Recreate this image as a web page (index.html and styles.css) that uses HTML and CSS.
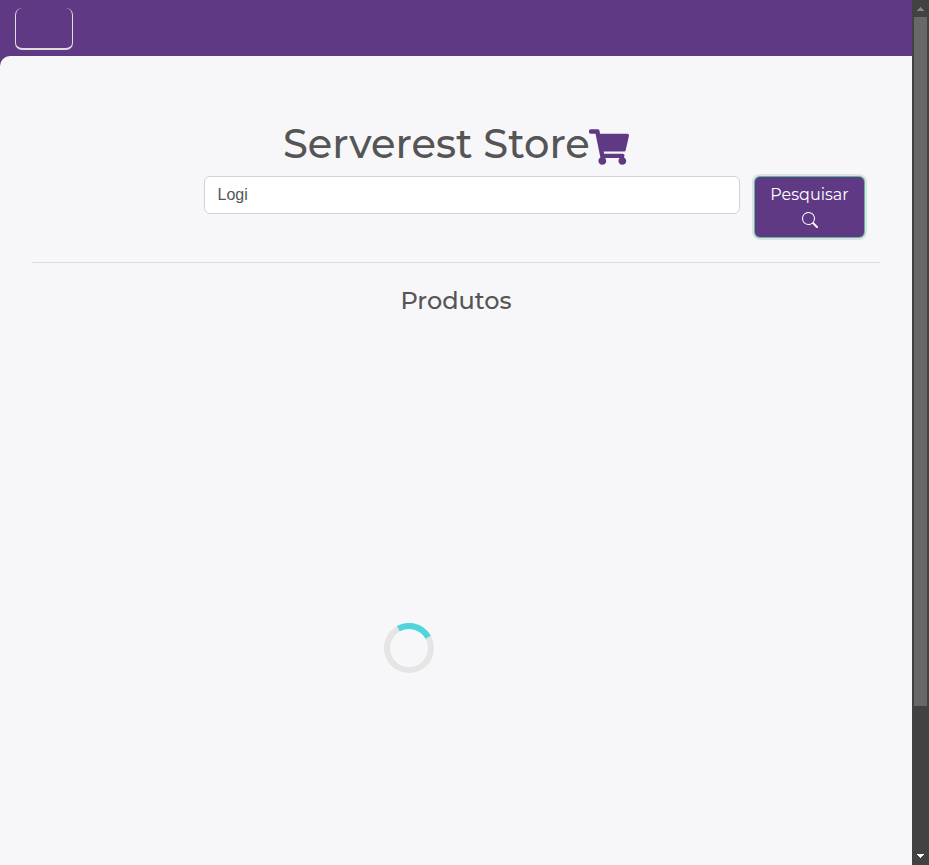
FILE: index.html
```
<!DOCTYPE html>
<html lang="pt-BR">
<head>
<meta charset="utf-8">
<title>Serverest Store</title>
<link rel="stylesheet" href="styles.css">
</head>
<body>
<div class="page">
  <nav class="navbar"><button class="toggler" aria-label="Menu"></button></nav>
  <main class="content">
    <h1 class="title"><span class="title-text">Serverest Store</span><svg class="cart" viewBox="0 0 576 512"><path d="M528.12 301.319l47.273-208C578.806 78.301 567.391 64 551.99 64H159.208l-9.166-44.81C147.758 8.021 137.93 0 126.529 0H24C10.745 0 0 10.745 0 24v16c0 13.255 10.745 24 24 24h69.883l70.248 343.435C147.325 417.1 136 435.222 136 456c0 30.928 25.072 56 56 56s56-25.072 56-56c0-15.674-6.447-29.835-16.824-40h209.647C430.447 426.165 424 440.326 424 456c0 30.928 25.072 56 56 56s56-25.072 56-56c0-22.172-12.888-41.332-31.579-50.405l5.517-24.276c3.413-15.018-8.002-29.319-23.403-29.319H218.117l-6.545-32h293.145c11.206 0 20.92-7.754 23.403-18.681z"/></svg></h1>
    <form class="search">
      <input class="field" type="text" value="Logi">
      <button class="submit" type="button"><span class="submit-text">Pesquisar</span>
        <svg class="lens" viewBox="0 0 16 16"><path d="M11.742 10.344a6.5 6.5 0 1 0-1.397 1.398h-.001c.03.04.062.078.098.115l3.85 3.85a1 1 0 0 0 1.415-1.414l-3.85-3.85a1.007 1.007 0 0 0-.115-.1zM12 6.5a5.5 5.5 0 1 1-11 0 5.5 5.5 0 0 1 11 0z"/></svg>
      </button>
    </form>
    <hr class="rule">
    <h4 class="subtitle"><span class="subtitle-text">Produtos</span></h4>
    <svg class="spinner" viewBox="0 0 50 50"><circle class="track" cx="25" cy="25" r="22"/><path class="arc" d="M14.4 5.7A22 22 0 0 1 44.2 14.3"/></svg>
  </main>
</div>
<div class="scrollbar">
  <svg class="arrow up" viewBox="0 0 17 17"><path d="M5 11h7L8.5 7z"/></svg>
  <div class="thumb"></div>
  <svg class="arrow down" viewBox="0 0 17 17"><path d="M5 6h7L8.5 10z"/></svg>
</div>
</body>
</html>
```
FILE: styles.css
```
* { box-sizing: border-box; }
body {
  margin: 0;
  height: 865px;
  display: flex;
  overflow: hidden;
  background: #603985;
  color: #555;
  font-family: Montserrat, Inter, sans-serif;
}
.page { width: 912px; }
.navbar { height: 56px; padding: 8px 15px; }
.toggler {
  display: block;
  width: 58px;
  height: 42px;
  padding: 0;
  background: transparent;
  border: 1px solid #dedede;
  border-width: 0 1px 2px;
  border-radius: 7px;
}
.content {
  height: 809px;
  padding: 64px 32px 0;
  background: #f7f7fa;
  border-top-left-radius: 10px;
}
.title {
  display: flex;
  justify-content: center;
  height: 48px;
  margin: 0 0 8px;
  font-size: 40px;
  line-height: 48px;
  font-weight: 500;
}
.title-text { width: 306px; white-space: nowrap; }
.cart { width: 40px; height: 36px; margin-top: 9px; fill: #603985; }
.search { display: flex; align-items: flex-start; padding-left: 172px; }
.field {
  width: 536px;
  height: 38px;
  padding: 0 12.5px;
  border: 1px solid #ced4da;
  border-radius: 6px;
  background: #fff;
  color: #555;
  font: 16px "Liberation Sans", Arial, sans-serif;
}
.submit {
  display: flex;
  flex-direction: column;
  align-items: center;
  width: 109px;
  height: 60px;
  margin: 1px 0 0 15px;
  padding: 6px 0 0;
  border: 0;
  border-radius: 5px;
  background: #603985;
  box-shadow: 0 0 0 1px #60b898, 0 0 0 3px #dce3e4;
  color: #fff;
  font: 400 16px/24px Montserrat, Inter, sans-serif;
}
.lens { width: 16px; height: 16px; margin-top: 5px; fill: #fff; }
.rule { height: 1px; margin: 25px 0 23px; border: 0; background: #dcdcdf; }
.subtitle {
  margin: 0;
  height: 29px;
  text-align: center;
  font-size: 24px;
  line-height: 29px;
  font-weight: 500;
}
.spinner { display: block; width: 50px; height: 50px; margin: 308px 0 0 352px; fill: none; stroke-width: 6; }
.track { stroke: #e5e5e5; }
.arc { stroke: #4fd5dc; }
.scrollbar { display: flex; flex-direction: column; width: 17px; background: #424242; }
.arrow { width: 17px; height: 17px; shape-rendering: crispEdges; }
.up { fill: #868686; }
.down { margin-top: auto; fill: #fff; }
.thumb { width: 13px; height: 689px; margin-left: 2px; background: #686868; }
```
